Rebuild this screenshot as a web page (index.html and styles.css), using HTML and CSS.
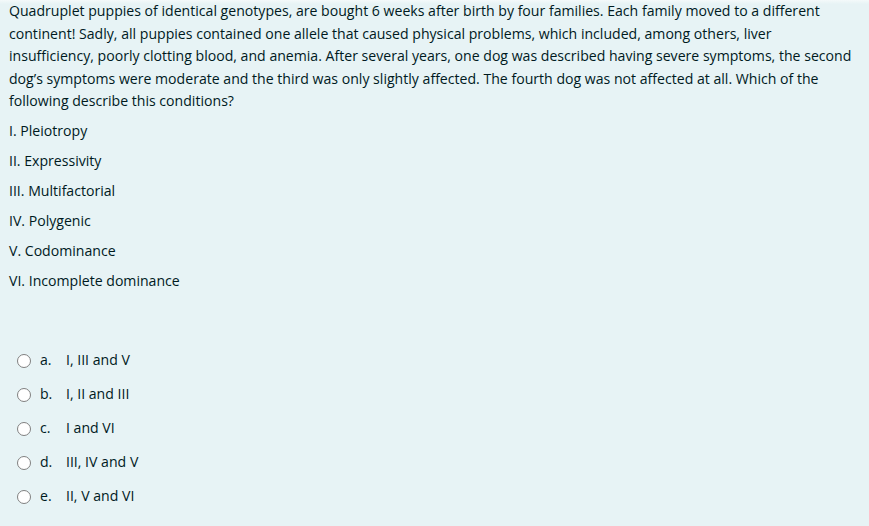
FILE: index.html
```html
<!DOCTYPE html>
<html lang="en">
<head>
<meta charset="utf-8">
<title>Question</title>
<link rel="stylesheet" href="styles.css">
</head>
<body>
<div class="formulation">
  <div class="qtext">
    <p>Quadruplet puppies of identical genotypes, are bought 6 weeks after birth by four families. Each family moved to a different continent! Sadly, all puppies contained one allele that caused physical problems, which included, among others, liver insufficiency, poorly clotting blood, and anemia. After several years, one dog was described having severe symptoms, the second dog’s symptoms were moderate and the third was only slightly affected. The fourth dog was not affected at all. Which of the following describe this conditions?</p>
    <p>I. Pleiotropy</p>
    <p>II. Expressivity</p>
    <p>III. Multifactorial</p>
    <p>IV. Polygenic</p>
    <p>V. Codominance</p>
    <p>VI. Incomplete dominance</p>
  </div>
  <div class="answer">
    <div class="option"><span class="radio"></span><span class="num">a.</span><span class="txt">I, III and V</span></div>
    <div class="option"><span class="radio"></span><span class="num">b.</span><span class="txt">I, II and III</span></div>
    <div class="option"><span class="radio"></span><span class="num">c.</span><span class="txt">I and VI</span></div>
    <div class="option"><span class="radio"></span><span class="num">d.</span><span class="txt">III, IV and V</span></div>
    <div class="option"><span class="radio"></span><span class="num">e.</span><span class="txt">II, V and VI</span></div>
  </div>
</div>
</body>
</html>
```
FILE: styles.css
```css
html, body {
  margin: 0;
  padding: 0;
}
body {
  background: #e7f3f5;
  color: #001a1e;
  font-family: "Open Sans", "Noto Sans", sans-serif;
  font-size: 14.1px;
  line-height: 22.5px;
}
.formulation {
  min-height: 526px;
  box-sizing: border-box;
  padding: 0 15px 0 9px;
  background: linear-gradient(#f4f9fa, #e7f3f5 4px);
}
.qtext p {
  margin: 0 0 7.5px;
}
.answer {
  margin-top: 51px;
  display: flex;
  flex-direction: column;
}
.option {
  height: 34px;
  display: flex;
  align-items: center;
}
.radio {
  width: 14px;
  height: 14px;
  box-sizing: border-box;
  border: 1.5px solid #808080;
  border-radius: 50%;
  background: #fff;
  margin-left: 8px;
  margin-right: 9px;
  flex: none;
}
.num {
  width: 26px;
  flex: none;
}
```
